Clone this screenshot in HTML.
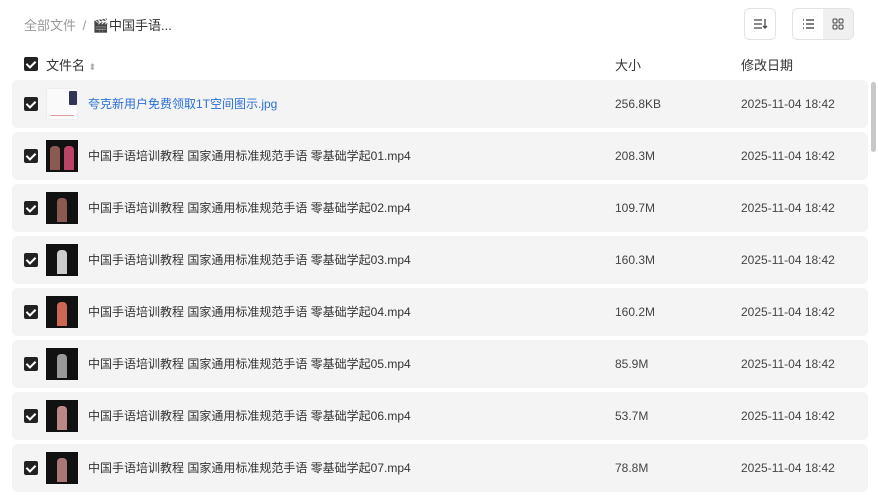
<!DOCTYPE html>
<html><head><meta charset="utf-8"><style>
*{margin:0;padding:0;box-sizing:border-box}
body{width:878px;height:495px;overflow:hidden;background:#fff;font-family:"Liberation Sans","Noto Sans CJK SC",sans-serif;color:#333;position:relative}
.abs{position:absolute}
.cb{position:absolute;left:24px;width:14px;height:14px;background:#222;border-radius:2px}
.cb:after{content:"";position:absolute;left:4px;top:2px;width:4px;height:7px;border:solid #fff;border-width:0 2px 2px 0;transform:rotate(45deg)}
.row{position:absolute;left:12px;width:856px;height:48px;background:#f4f4f5;border-radius:6px}
.row .cb{left:12px;top:17px}
.th{position:absolute;left:34px;top:8px;width:32px;height:32px;background:#111;overflow:hidden}
.th i{position:absolute;left:11px;top:6px;width:10px;height:24px;background:#8a5a50;border-radius:4px 4px 0 0}
.nm,.sz,.dt{position:absolute;top:0;line-height:48px;font-size:12px;font-family:"Liberation Sans","Noto Sans CJK SC",sans-serif}
.nm{left:76px;color:#333}
.sz{left:603px;color:#444}
.dt{left:729px;color:#444}
</style></head><body>
<div class="abs" style="left:24px;top:15px;font-size:13px;color:#999">全部文件 <span style="margin:0 3px">/</span> <span style="color:#333">🎬中国手语...</span></div>
<div class="abs" style="left:744px;top:8px;width:32px;height:32px;border:1px solid #e2e2e2;border-radius:6px">
<svg width="30" height="30" viewBox="0 0 30 30"><path d="M9 11h8M9 15h8M9 19h8M20 10v9M18 17l2 2 2-2" stroke="#444" stroke-width="1.3" fill="none"/></svg></div>
<div class="abs" style="left:792px;top:8px;width:62px;height:32px;border:1px solid #e2e2e2;border-radius:6px;overflow:hidden">
<div class="abs" style="left:30px;top:0;width:31px;height:30px;background:#f0f0f0"></div>
<svg class="abs" style="left:0;top:0" width="60" height="30" viewBox="0 0 60 30"><path d="M10 11h1M10 15h1M10 19h1M13 11h8M13 15h8M13 19h8" stroke="#333" stroke-width="1.3"/><rect x="40" y="10" width="4" height="4" rx="1" stroke="#444" fill="none"/><rect x="46" y="10" width="4" height="4" rx="1" stroke="#444" fill="none"/><rect x="40" y="16" width="4" height="4" rx="1" stroke="#444" fill="none"/><rect x="46" y="16" width="4" height="4" rx="1" stroke="#444" fill="none"/></svg></div>
<div class="cb" style="top:57px"></div>
<div class="abs" style="left:46px;top:55px;font-size:13px">文件名 <span style="color:#aaa;font-size:9px">⬍</span></div>
<div class="abs" style="left:615px;top:55px;font-size:13px">大小</div>
<div class="abs" style="left:741px;top:55px;font-size:13px">修改日期</div>
<div class="row" style="top:80px"><div class="cb"></div><div class="th" style="background:#fafafa;border:1px solid #eee"><i style="left:22px;top:2px;width:8px;height:14px;background:#335;border-radius:1px"></i><i style="left:3px;top:26px;width:24px;height:1px;background:#d99"></i></div><div class="nm" style="color:#2a6fd8">夸克新用户免费领取1T空间图示.jpg</div><div class="sz">256.8KB</div><div class="dt">2025-11-04 18:42</div></div>
<div class="row" style="top:132px"><div class="cb"></div><div class="th"><i style="left:4px"></i><i style="left:18px;background:#b46"></i></div><div class="nm">中国手语培训教程 国家通用标准规范手语 零基础学起01.mp4</div><div class="sz">208.3M</div><div class="dt">2025-11-04 18:42</div></div>
<div class="row" style="top:184px"><div class="cb"></div><div class="th"><i></i></div><div class="nm">中国手语培训教程 国家通用标准规范手语 零基础学起02.mp4</div><div class="sz">109.7M</div><div class="dt">2025-11-04 18:42</div></div>
<div class="row" style="top:236px"><div class="cb"></div><div class="th"><i style="background:#ccc"></i></div><div class="nm">中国手语培训教程 国家通用标准规范手语 零基础学起03.mp4</div><div class="sz">160.3M</div><div class="dt">2025-11-04 18:42</div></div>
<div class="row" style="top:288px"><div class="cb"></div><div class="th"><i style="background:#c65"></i></div><div class="nm">中国手语培训教程 国家通用标准规范手语 零基础学起04.mp4</div><div class="sz">160.2M</div><div class="dt">2025-11-04 18:42</div></div>
<div class="row" style="top:340px"><div class="cb"></div><div class="th"><i style="background:#999"></i></div><div class="nm">中国手语培训教程 国家通用标准规范手语 零基础学起05.mp4</div><div class="sz">85.9M</div><div class="dt">2025-11-04 18:42</div></div>
<div class="row" style="top:392px"><div class="cb"></div><div class="th"><i style="background:#b88"></i></div><div class="nm">中国手语培训教程 国家通用标准规范手语 零基础学起06.mp4</div><div class="sz">53.7M</div><div class="dt">2025-11-04 18:42</div></div>
<div class="row" style="top:444px"><div class="cb"></div><div class="th"><i style="background:#a77"></i></div><div class="nm">中国手语培训教程 国家通用标准规范手语 零基础学起07.mp4</div><div class="sz">78.8M</div><div class="dt">2025-11-04 18:42</div></div>
<div class="abs" style="left:871px;top:82px;width:5px;height:70px;background:#c8c8c8;border-radius:3px"></div>
</body></html>
